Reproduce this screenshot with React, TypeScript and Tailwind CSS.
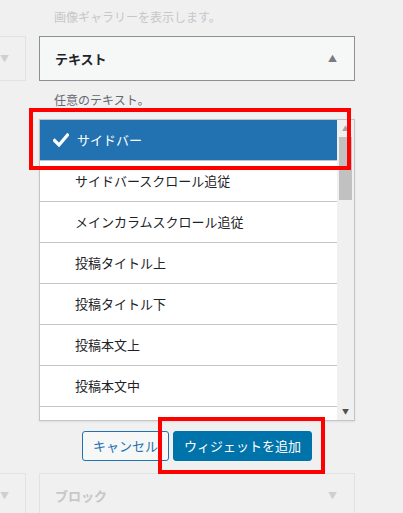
const items = [
  "サイドバー",
  "サイドバースクロール追従",
  "メインカラムスクロール追従",
  "投稿タイトル上",
  "投稿タイトル下",
  "投稿本文上",
  "投稿本文中",
  "",
];

function Check() {
  return (
    <svg width="16" height="14" viewBox="0 0 16 14" className="shrink-0">
      <path d="M1.5 7.5 L6 12 L14.5 2" fill="none" stroke="#fff" strokeWidth="3.2" strokeLinecap="square" />
    </svg>
  );
}

export default function App() {
  return (
    <div
      className="relative h-[513px] w-[403px] overflow-hidden bg-[#f0f0f0] text-[13px]"
      style={{ fontFamily: '"Noto Sans CJK JP", "Noto Sans", sans-serif' }}
    >
      <div className="flex flex-col pt-[6px]">
        {/* faded description above */}
        <div className="flex h-[22px] items-center pl-[54px] text-[12px] text-[#c6c7c9]">画像ギャラリーを表示します。</div>

        {/* header row */}
        <div className="mt-[8px] flex gap-[13px]">
          <div className="-ml-[1px] flex h-[45px] w-[27px] items-center justify-end border border-[#e2e2e2] pr-[16px]">
            <span className="text-[9px] text-[#cfcfcf]">▼</span>
          </div>
          <div className="flex h-[45px] w-[316px] items-center justify-between border border-[#8c8f94] bg-[#f6f7f7] pl-[15px] pr-[17px]">
            <span className="font-bold text-[#1d2327]">テキスト</span>
            <span className="text-[9px] text-[#787c82]">▲</span>
          </div>
        </div>

        {/* description */}
        <div className="flex h-[38px] items-center pl-[54px] text-[12px] text-[#646970]">任意のテキスト。</div>

        {/* sidebar list */}
        <div className="ml-[39px] flex h-[302px] w-[316px] border border-[#c3c4c7] bg-white shadow-[0_1px_2px_rgba(0,0,0,0.08)]">
          <div className="flex-1 overflow-hidden">
            {items.map((it, i) => (
              <div
                key={i}
                className={
                  i === 0
                    ? "flex h-[41px] items-center gap-[8px] border-b border-[#c3c4c7] bg-[#2271b1] pl-[13px] text-white"
                    : "flex h-[41px] items-center border-b border-[#c3c4c7] pl-[35px] text-[#1d2327]"
                }
              >
                {i === 0 && <Check />}
                <span>{it}</span>
              </div>
            ))}
          </div>
          <div className="flex w-[17px] flex-col bg-[#f0f0f0]">
            <div className="flex h-[17px] items-center justify-center text-[7px] text-[#a3a3a3]">▲</div>
            <div className="mx-[2px] h-[63px] bg-[#c1c1c1]" />
            <div className="flex-1" />
            <div className="flex h-[17px] items-center justify-center text-[7px] text-[#505050]">▼</div>
          </div>
        </div>

        {/* buttons */}
        <div className="ml-[39px] mt-[10px] flex w-[316px] justify-center gap-[4px]">
          <button className="h-[30px] rounded-[3px] border border-[#2271b1] bg-[#f6f7f7] px-[10px] text-[#2271b1]">
            キャンセル
          </button>
          <button className="h-[30px] rounded-[3px] border border-[#0073aa] bg-[#0073aa] px-[10px] text-white">
            ウィジェットを追加
          </button>
        </div>

        {/* next widget row */}
        <div className="mt-[12px] flex gap-[13px]">
          <div className="-ml-[1px] flex h-[45px] w-[27px] items-center justify-end border border-[#e2e2e2] pr-[16px]">
            <span className="text-[9px] text-[#cfcfcf]">▼</span>
          </div>
          <div className="flex h-[45px] w-[316px] items-center justify-between border border-[#e2e2e2] pl-[15px] pr-[17px]">
            <span className="font-bold text-[#c6c7c9]">ブロック</span>
            <span className="text-[9px] text-[#cfcfcf]">▼</span>
          </div>
        </div>
      </div>

      {/* red annotation boxes */}
      <div className="absolute left-[29px] top-[108px] h-[62px] w-[322px] border-4 border-[#ff0000]" />
      <div className="absolute left-[158px] top-[417px] h-[57px] w-[167px] border-4 border-[#ff0000]" />
    </div>
  );
}
